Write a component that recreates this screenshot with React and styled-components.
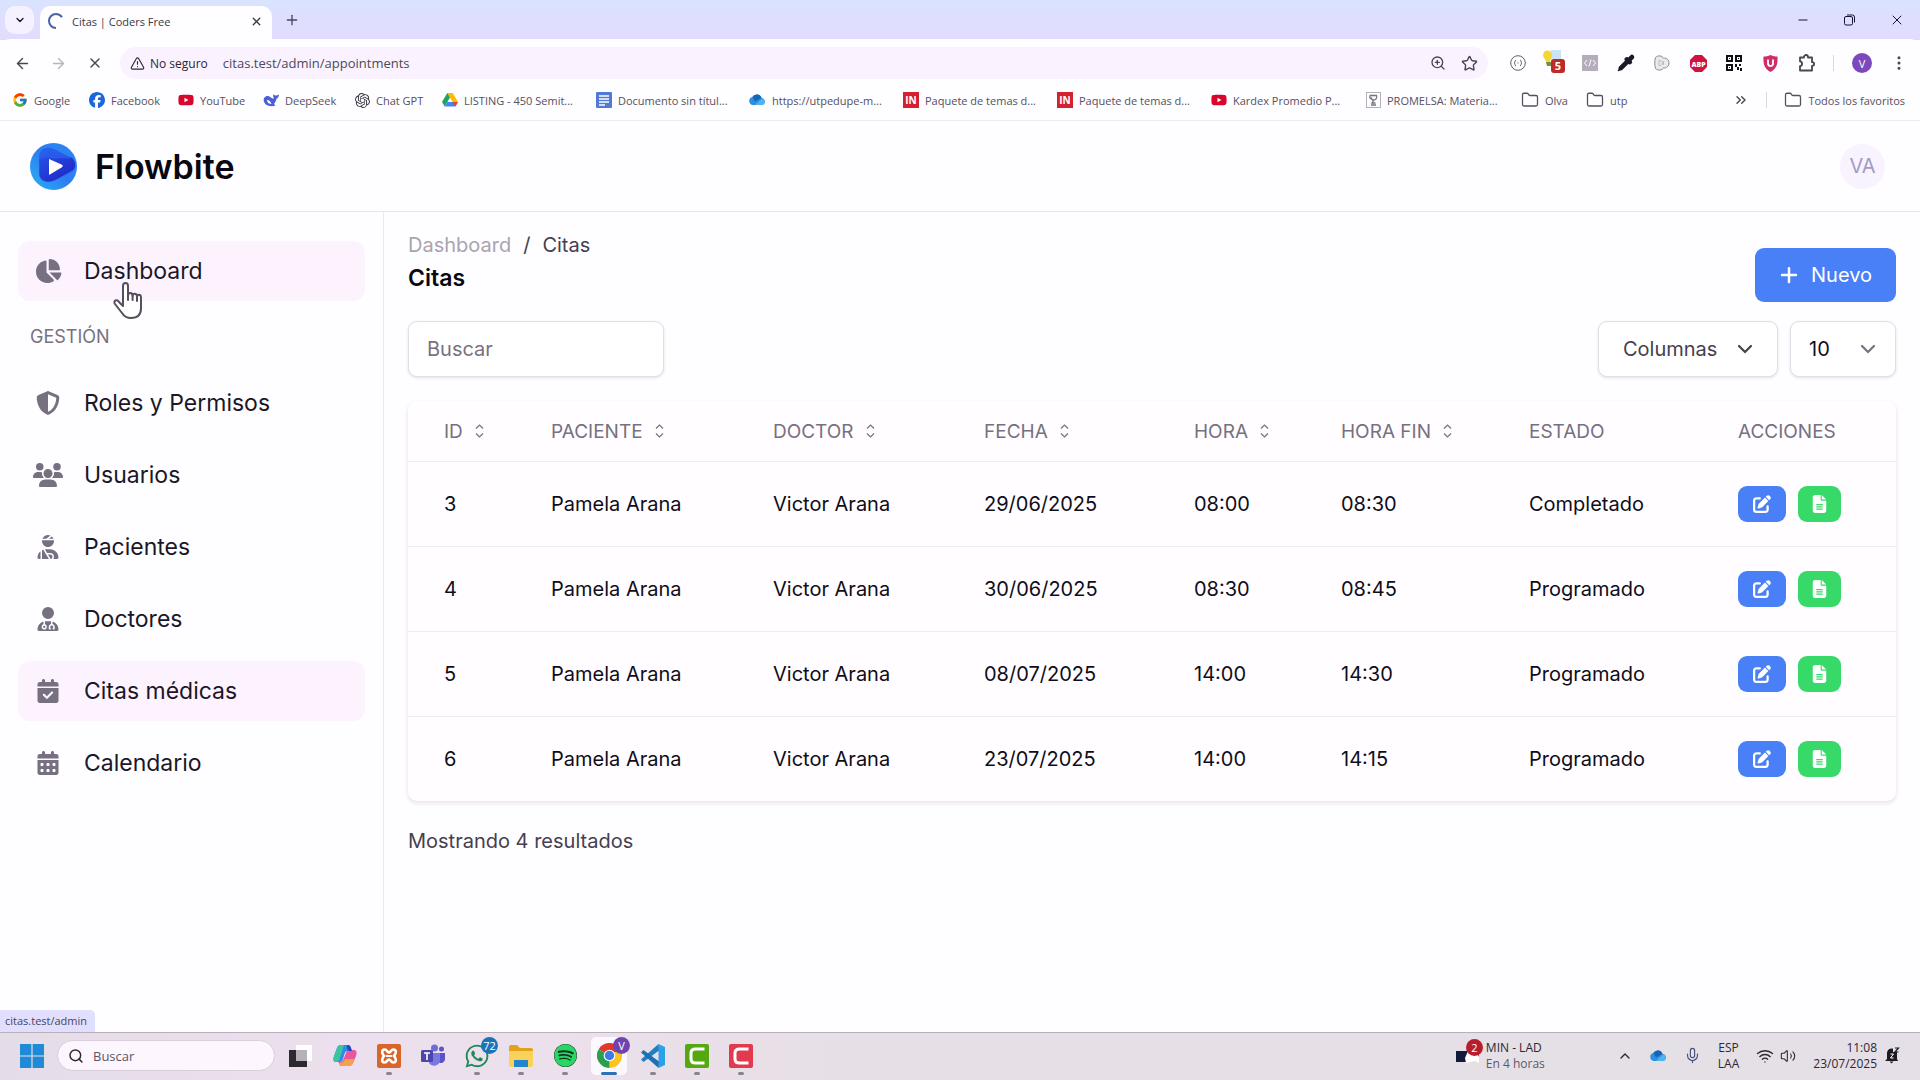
import React from "react";
import styled, { createGlobalStyle, css } from "styled-components";
import {
  FaChartPie, FaShieldHalved, FaUsers, FaUserInjured, FaUserDoctor, FaCalendarCheck,
  FaCalendarDays, FaPlus, FaPenToSquare, FaFileLines, FaFacebook, FaYoutube, FaWhatsapp, FaSpotify,
} from "react-icons/fa6";
import { FcGoogle } from "react-icons/fc";
import { SiOpenai } from "react-icons/si";
import {
  ArrowLeft, ArrowRight, X, TriangleAlert, ZoomIn, Star, ChevronDown, ChevronUp, Plus, Minus,
  Folder, ChevronsRight, Search, Mic, Wifi, Volume2, EllipsisVertical, Pipette,
} from "lucide-react";

const ui = `"Open Sans", "Noto Sans", sans-serif`;
const app = `Inter, Roboto, sans-serif`;

const Global = createGlobalStyle`
  *, *::before, *::after { box-sizing: border-box; }
  body { margin: 0; font-family: ${app}; color: #120f1c; background: #fefdff; }
  button, input, select { font: inherit; color: inherit; margin: 0; }
  button { border: 0; background: none; padding: 0; cursor: pointer; }
  a { color: inherit; text-decoration: none; }
  ul, ol { list-style: none; margin: 0; padding: 0; }
  svg { display: block; flex-shrink: 0; }
`;

const Desktop = styled.div`
  display: flex;
  flex-direction: column;
  min-height: 100vh;
`;

/* ---------- browser ---------- */
const TabStrip = styled.div`
  display: flex;
  align-items: flex-end;
  height: 40px;
  padding-left: 5px;
  background: linear-gradient(#d8e4ff 0, #dedffe 14px, #e1dcfd 100%);
  font-family: ${ui};
`;
const TabSearch = styled.button`
  display: grid;
  place-items: center;
  align-self: center;
  width: 29px;
  height: 28px;
  border-radius: 10px;
  background: #f5f1fe;
`;
const Tab = styled.div`
  display: flex;
  align-items: center;
  gap: 8px;
  width: 232px;
  height: 34px;
  margin-left: 6px;
  padding: 0 9px 4px 8px;
  border-radius: 10px 10px 0 0;
  background: #fefdff;
  font-size: 11px;
  color: #3c3846;
  span { flex: 1; }
`;
const NewTab = styled.button`
  align-self: center;
  margin-left: 12px;
  color: #4b4760;
`;
const WindowButtons = styled.div`
  display: flex;
  align-self: center;
  align-items: center;
  gap: 34px;
  margin: 0 15px 0 auto;
  color: #17123a;
`;

const Toolbar = styled.div`
  display: flex;
  align-items: center;
  gap: 15px;
  height: 45px;
  margin-top: -1px;
  padding: 3px 12px 0 12px;
  border-radius: 10px 10px 0 0;
  background: #fefdff;
  font-family: ${ui};
  color: #4a4652;
`;
const NavButton = styled.button`
  width: 21px;
  display: grid;
  place-items: center;
  color: ${(p) => (p.$off ? "#b9b5be" : "#4a4652")};
`;
const Omnibox = styled.div`
  flex: 1;
  display: flex;
  align-items: center;
  gap: 15px;
  height: 32px;
  padding: 0 10px;
  border-radius: 16px;
  background: #faf2ff;
`;
const Security = styled.button`
  display: flex;
  align-items: center;
  gap: 5px;
  font-size: 12px;
  font-weight: 500;
  color: #2b2733;
`;
const Address = styled.input`
  flex: 1;
  min-width: 0;
  padding: 0;
  border: 0;
  outline: 0;
  background: none;
  font-size: 13px;
  color: #4d4858;
`;
const Extensions = styled.div`
  display: grid;
  grid-auto-flow: column;
  grid-template-columns: repeat(9, 18px) 1px 20px 18px;
  justify-items: center;
  align-items: center;
  gap: 18px;
  padding-left: 6px;
`;
const Divider = styled.span`
  width: 1px;
  height: 16px;
  background: #dcd5e4;
`;
const Profile = styled.button`
  display: grid;
  place-items: center;
  width: 20px;
  height: 20px;
  border-radius: 50%;
  background: #7b48bd;
  color: #fff;
  font-size: 11px;
`;

const BookmarkBar = styled.nav`
  display: flex;
  align-items: center;
  gap: 17px;
  height: 37px;
  padding: 0 15px 4px 12px;
  border-bottom: 1px solid #ece9ef;
  background: #fefdff;
  font-family: ${ui};
  font-size: 11px;
  color: #55505e;
`;
const BookmarkLink = styled.a`
  display: flex;
  align-items: center;
  gap: 6px;
  white-space: nowrap;
  span { ${(p) => p.$label && css`width: ${p.$label}px;`} }
`;
const Overflow = styled.button`
  margin-left: auto;
  color: #45404e;
`;
const RedSquare = styled.i`
  display: grid;
  place-items: center;
  width: 16px;
  height: 16px;
  background: #d5202f;
  color: #fff;
  font: 700 10px ${ui};
`;

/* ---------- application ---------- */
const Header = styled.header`
  display: flex;
  align-items: center;
  justify-content: space-between;
  height: 91px;
  padding: 0 35px 0 30px;
  border-bottom: 1px solid #e9e5ec;
`;
const Brand = styled.a`
  display: flex;
  align-items: center;
  gap: 18px;
  font-size: 34px;
  font-weight: 600;
  color: #09070f;
`;
const Avatar = styled.button`
  display: grid;
  place-items: center;
  width: 45px;
  height: 45px;
  border-radius: 50%;
  background: #f8f3ff;
  color: #a39bc4;
  font-size: 20px;
`;
const Body = styled.div`
  position: relative;
  flex: 1;
  display: flex;
`;
const Sidebar = styled.aside`
  width: 384px;
  padding: 29px 18px;
  border-right: 1px solid #ebe8ee;
  ul { display: grid; gap: 12px; }
`;
const NavLink = styled.a`
  display: flex;
  align-items: center;
  gap: 18px;
  height: 60px;
  padding: 0 12px;
  border-radius: 12px;
  font-size: 23px;
  color: #1b1727;
  background: ${(p) => (p.$active ? "#fdf3ff" : "transparent")};
  svg { width: 36px; color: #767080; }
`;
const NavHeading = styled.li`
  padding: 12px;
  line-height: 24px;
  font-size: 18px;
  color: #777180;
`;
const Content = styled.main`
  flex: 1;
  min-width: 0;
  padding: 18px 24px;
`;
const TitleRow = styled.div`
  display: flex;
  align-items: flex-end;
  justify-content: space-between;
  margin-bottom: 19px;
`;
const Titles = styled.div`
  padding-bottom: 6px;
`;
const Crumbs = styled.ol`
  display: flex;
  gap: 12px;
  line-height: 30px;
  font-size: 20px;
  color: #454050;
  a { color: #aaa4b0; }
`;
const Title = styled.h1`
  margin: 0;
  line-height: 36px;
  font-size: 23px;
  font-weight: 600;
  color: #09070f;
`;
const NewButton = styled.button`
  display: flex;
  align-items: center;
  gap: 12px;
  height: 54px;
  padding: 0 24px;
  border-radius: 9px;
  background: #4a80f7;
  color: #fff;
  font-size: 20px;
`;
const Tools = styled.div`
  display: flex;
  gap: 12px;
  margin-bottom: 24px;
`;
const field = css`
  height: 56px;
  border: 1px solid #e2dde6;
  border-radius: 9px;
  background: #fff;
  box-shadow: 0 1px 3px #2b1b3a1f;
  font-size: 20px;
`;
const SearchField = styled.input`
  ${field}
  width: 256px;
  margin-right: auto;
  padding: 0 18px;
  &::placeholder { color: #77727e; opacity: 1; }
`;
const ColumnsButton = styled.button`
  ${field}
  display: flex;
  align-items: center;
  justify-content: space-between;
  width: 180px;
  padding: 0 24px;
  color: #45404f;
`;
const PageSize = styled.label`
  display: grid;
  align-items: center;
  width: 106px;
  select, svg { grid-area: 1 / 1; }
  select { ${field} width: 100%; padding: 0 18px; appearance: none; }
  svg { justify-self: end; margin-right: 20px; color: #77727e; pointer-events: none; }
`;
const Card = styled.div`
  border-radius: 9px;
  overflow: hidden;
  background: #fffdff;
  box-shadow: 0 2px 4px #6b2c7a24;
`;
const Table = styled.table`
  width: 100%;
  table-layout: fixed;
  border-collapse: separate;
  border-spacing: 0;
  text-align: left;
`;
const Col = styled.col`
  width: ${(p) => p.$share}%;
`;
const Th = styled.th`
  height: 61px;
  padding: 0 0 0 36px;
  border-bottom: 1px solid #f4eaf6;
  font-size: 19px;
  font-weight: 400;
  color: #77707f;
  white-space: nowrap;
  button { display: flex; align-items: center; gap: 12px; }
`;
const Td = styled.td`
  height: 85px;
  padding: 0 0 0 36px;
  border-bottom: 1px solid #efebf2;
  font-size: 20px;
  color: #100d19;
  white-space: nowrap;
  tr:last-child > & { height: 84px; border-bottom: 0; }
`;
const Actions = styled.div`
  display: flex;
  gap: 12px;
`;
const ActionButton = styled.a`
  display: grid;
  place-items: center;
  height: 36px;
  padding: 0 ${(p) => (p.$green ? 14 : 15)}px;
  border-radius: 9px;
  background: ${(p) => (p.$green ? "#37d968" : "#4a80f7")};
  color: #fff;
`;
const DocIcon = styled(FaFileLines)`
  width: 15px;
`;
const Summary = styled.p`
  margin: 24px 0 0;
  line-height: 32px;
  font-size: 20px;
  color: #45404f;
`;
const StatusBubble = styled.div`
  position: absolute;
  left: 0;
  bottom: 0;
  padding: 2px 8px 3px 5px;
  border-radius: 0 5px 0 0;
  background: #e1dffd;
  font: 11px/17px ${ui};
  color: #494560;
`;
const Pointer = styled.svg`
  position: absolute;
  left: 113px;
  top: 70px;
`;

/* ---------- taskbar ---------- */
const Taskbar = styled.footer`
  display: flex;
  align-items: center;
  height: 48px;
  padding: 0 20px 2px;
  border-top: 1px solid #b9b0bd;
  background: linear-gradient(90deg, #e4dde7, #ede0ee 20%, #e7dfe6 45%, #e5dfe7);
  font-family: ${ui};
  font-size: 12px;
  color: #2b2733;
`;
const TaskSearch = styled.label`
  display: flex;
  align-items: center;
  gap: 9px;
  width: 218px;
  height: 31px;
  margin: 0 8px 0 13px;
  padding-left: 10px;
  border: 1px solid #d9cedd;
  border-radius: 16px;
  background: #fdf6ff;
  input { width: 150px; padding: 0; border: 0; outline: 0; background: none; font-size: 13px; }
  input::placeholder { color: #5b5563; opacity: 1; }
`;
const TaskButton = styled.button`
  position: relative;
  display: grid;
  place-items: center;
  width: 36px;
  height: 38px;
  margin-right: 8px;
  border-radius: 5px;
  background: ${(p) => (p.$state === "active" ? "#fdf8fe" : "none")};
  &::after {
    content: "";
    display: ${(p) => (p.$state ? "block" : "none")};
    position: absolute;
    bottom: 0;
    width: ${(p) => (p.$state === "active" ? 16 : 6)}px;
    height: 3px;
    border-radius: 2px;
    background: ${(p) => (p.$state === "active" ? "#2a72b5" : "#8a8390")};
  }
`;
const Badge = styled.span`
  position: absolute;
  top: 0;
  right: -3px;
  display: grid;
  place-items: center;
  min-width: 17px;
  height: 17px;
  padding: 0 2px;
  border-radius: 9px;
  background: ${(p) => p.$color};
  color: #fff;
  font-size: 11px;
  line-height: 1;
`;
const Widget = styled.button`
  position: relative;
  display: flex;
  align-items: center;
  gap: 5px;
  margin-left: auto;
  text-align: left;
  line-height: 16px;
  small { display: block; font-size: 12px; color: #5f5967; }
  ${Badge} { left: 10px; right: auto; top: -1px; }
`;
const SpotifyDisc = styled(FaSpotify)`
  border-radius: 50%;
  background: #16301f;
  color: #25d865;
`;
const Tray = styled.div`
  display: flex;
  align-items: center;
  gap: 17px;
  margin-left: 72px;
  line-height: 16px;
`;
const Stack = styled.div`
  text-align: ${(p) => p.$align};
`;
const TrayPair = styled.div`
  display: flex;
  align-items: center;
  gap: 6px;
`;
const ClockGroup = styled.div`
  display: flex;
  align-items: center;
  gap: 8px;
`;

/* ---------- drawings ---------- */
const Drive = () => (
  <svg width="16" height="16" viewBox="0 0 16 16">
    <path d="M5.3 1h5.4L16 10h-5.4z" fill="#fbbc04" />
    <path d="M5.3 1 0 10l2.7 4.6L8 5.5z" fill="#1ea362" />
    <path d="M5.3 10H16l-2.7 4.6H2.7z" fill="#4285f4" />
    <path d="m16 10-2.7 4.6L10.6 10z" fill="#ea4335" />
  </svg>
);
const Whale = () => (
  <svg width="16" height="14" viewBox="0 0 16 14" fill="#4d5fd6">
    <path d="M1 5c2-3 5-2.500 7-.5C9 5.500 10 6 11 5c-1-1-1-2.500-.5-4 .7 1.200 1.500 1.600 2.500 1.500C14 2.400 15 2 16 1.500c0 2-1 3.500-2.500 4.300C13 8 12.300 9.500 11 11l1.500 1.500C9 14 4 13 2 10.500.8 9 .3 7 1 5z" />
    <path d="M4 7c2 0 3.500 1.500 4.500 4C6 11 4 9.500 4 7z" fill="#fefdff" />
  </svg>
);
const Doc = () => (
  <svg width="16" height="16" viewBox="0 0 16 16">
    <rect width="16" height="16" rx="1" fill="#5079d8" />
    <path d="M3 4h10M3 7h10M3 10h10M3 13h6" stroke="#fff" strokeWidth="1.400" />
  </svg>
);
const Cloud = ({ size = 17 }) => (
  <svg width={size} height={size * 0.65} viewBox="0 0 17 11">
    <path d="M4 11a4 4 0 0 1-.6-7.900A5 5 0 0 1 12.500 4 3.600 3.600 0 0 1 13.500 11z" fill="#2d8fe0" />
    <path d="M3.400 3.100A5 5 0 0 1 12.500 4L6 7.500z" fill="#1566b8" />
    <path d="m6 11 7-6.500A3.400 3.400 0 0 1 13.500 11z" fill="#4fb4f0" />
  </svg>
);
const Trophy = () => (
  <svg width="15" height="16" viewBox="0 0 15 16" fill="none" stroke="#77727e">
    <rect x=".5" y=".5" width="14" height="15" stroke="#b5b0ba" />
    <path d="M4 3.500h6.500c1 3-1 4.500-3 4.500S5 6.500 6 5.500M4 3.500c-.5 2 0 3 1 3.500M8 8l-2 3h3.500M5 13h5" strokeWidth="1.300" />
  </svg>
);
const Braces = () => (
  <svg width="16" height="16" viewBox="0 0 16 16" fill="none" stroke="#625d69">
    <circle cx="8" cy="8" r="7.300" />
    <path d="M6 5c-1.500 0-.5 3-2 3 1.500 0 .5 3 2 3M10 5c1.500 0 .5 3 2 3-1.500 0-.5 3-2 3M7.500 8h1" />
  </svg>
);
const Bulb = () => (
  <svg width="22" height="28" viewBox="0 0 22 28">
    <rect x="8" y="1" width="10" height="11" fill="#c9e4f4" />
    <path d="M0 6a4.500 4.500 0 0 1 9 0c0 3-2 4-2 7H3c0-3-3-4-3-7z" fill="#f3d63c" />
    <path d="M3 13h5v4H4z" fill="#7a8b3e" />
    <rect x="8" y="10" width="14" height="14" rx="3" fill="#bd2a27" />
    <text x="15" y="21" fontSize="11" fontWeight="700" fill="#fff" textAnchor="middle" fontFamily="Open Sans">5</text>
  </svg>
);
const CodeBox = () => (
  <svg width="16" height="16" viewBox="0 0 16 16" fill="none" stroke="#fff">
    <rect width="16" height="16" fill="#b3adbc" stroke="none" />
    <path d="M5 5 2.500 8 5 11M11 5l2.500 3L11 11M9 4.500l-2 7" />
  </svg>
);
const Blob = () => (
  <svg width="16" height="16" viewBox="0 0 16 16" fill="#ece9ee" stroke="#8d8893">
    <path d="M1.500 2.500C4 0 8 .5 9.500 3.200c3-.7 5.500 1.800 5.500 4.800s-2.500 5.500-5.500 4.800C8 15.500 4 16 1.500 13.500.5 10 .5 6 1.500 2.500z" />
    <path d="M5 5.500a2.600 2.600 0 1 1 0 5zM9.500 6v4" fill="none" stroke="#bdb8c3" />
  </svg>
);
const Abp = () => (
  <svg width="17" height="17" viewBox="0 0 17 17">
    <path d="M5 0h7l5 5v7l-5 5H5l-5-5V5z" fill="#cf1440" />
    <text x="8.500" y="11.500" fontSize="7" fontWeight="800" fill="#fff" textAnchor="middle" fontFamily="Open Sans">ABP</text>
  </svg>
);
const Qr = () => (
  <svg width="16" height="16" viewBox="0 0 16 16" fill="none" stroke="#111" strokeWidth="2">
    <path d="M1 1h5v5H1zM10 1h5v5h-5zM1 10h5v5H1z" />
    <path d="M3 3h1v1H3zM12 3h1v1h-1zM3 12h1v1H3zM14 14h1v1h-1z" fill="#111" stroke="none" />
    <path d="M10 9v3M14 9v2M12 12v3M15 13v3" />
  </svg>
);
const ShieldU = () => (
  <svg width="15" height="17" viewBox="0 0 15 17">
    <path d="M7.500 0c2.500 1 4.500 1.500 7 1.500C15 9 13.500 14 7.500 17 1.500 14 0 9 .5 1.500 3 1.500 5 1 7.500 0z" fill="#cf2c69" />
    <path d="M5 4.500v4a2.500 2.500 0 0 0 5 0v-4" fill="none" stroke="#fff" strokeWidth="1.800" />
  </svg>
);
const Puzzle = () => (
  <svg width="17" height="18" viewBox="0 0 17 18" fill="none" stroke="currentColor" strokeWidth="1.800" strokeLinejoin="round">
    <path d="M2 3.500h4V3a2 2 0 0 1 4 0v.5h4v4.700h.3a1.800 1.800 0 0 1 0 3.600H14v4.700H2v-4.300c2.800-.4 2.800-4.400 0-4.800z" />
  </svg>
);
const Restore = () => (
  <svg width="11" height="12" viewBox="0 0 11 12" fill="none" stroke="currentColor">
    <rect x=".5" y="2.500" width="8" height="8.500" rx="1.500" />
    <path d="M3 1h5.500a2 2 0 0 1 2 2v5.500" />
  </svg>
);
const Spinner = () => (
  <svg width="16" height="16" viewBox="0 0 16 16" fill="none" stroke="#4b62a8" strokeWidth="2">
    <path d="M8 15A7 7 0 0 1 8 1c2.500 0 4.500 1 6 3.200" />
  </svg>
);
const FlowLogo = () => (
  <svg width="47" height="47" viewBox="0 0 47 47">
    <defs>
      <linearGradient id="disc" x1="0" y1="1" x2="1" y2="0">
        <stop offset="0" stopColor="#2ab4f2" /><stop offset=".5" stopColor="#2c7df2" /><stop offset="1" stopColor="#2e86f4" />
      </linearGradient>
      <linearGradient id="fold" x1="0" y1="0" x2="1" y2="1">
        <stop offset="0" stopColor="#2450e4" /><stop offset="1" stopColor="#2320c2" />
      </linearGradient>
    </defs>
    <circle cx="23.500" cy="23.500" r="23.500" fill="url(#disc)" />
    <path d="M9 14C9 6 17 3 24 6l16 8c6 3 7 10 3 14L26 37c-8 4-17 2-17-7z" fill="#2560ec" />
    <path d="M9.500 16c3-3 8-2.500 12-.5l20-1c4 3 5 9 1.500 12.500L26 36.500c-8 4-16.500 2-16.500-6.500z" fill="url(#fold)" />
    <path d="M10 16C16 8 26 9 32 11l9 5c-8 0-13-3-20-1z" fill="#2c55ea" opacity=".7" />
    <path d="M19 16 31.500 21.500q2.500 1.500 0 3L19 32z" fill="#fff" />
  </svg>
);
const Sort = () => (
  <svg width="9" height="14" viewBox="0 0 9 14" fill="none" stroke="#77707f" strokeWidth="1.200">
    <path d="m1 4.500 3.500-3.500L8 4.500M1 9.500 4.500 13 8 9.500" />
  </svg>
);
const Chevron = () => (
  <svg width="16" height="10" viewBox="0 0 16 10" fill="none" stroke="currentColor" strokeWidth="2.200" strokeLinecap="round">
    <path d="m2 2 6 6 6-6" />
  </svg>
);
const Windows = () => (
  <svg width="24" height="24" viewBox="0 0 24 24" fill="#1f8bd8">
    <path d="M0 0h11.400v11.400H0zM12.600 0H24v11.400H12.600zM0 12.600h11.400V24H0zM12.600 12.600H24V24H12.600z" />
  </svg>
);
const TaskView = () => (
  <svg width="24" height="24" viewBox="0 0 24 24">
    <rect x="7" y="1" width="16" height="16" fill="#fff" />
    <rect x="0" y="6" width="18" height="17" fill="#2c2931" />
    <rect x="7" y="6" width="11" height="11" fill="#b5b0ba" />
  </svg>
);
const Copilot = () => (
  <svg width="24" height="23" viewBox="0 0 24 23">
    <path d="M8 1h7c2 0 2.500 1 3 3l1 3h-4c-2 0-3 1-3.500 3L10 15c-.6 2-1.500 3-3.500 3H3c-3 0-3-3-2-6L4 4c.7-2 2-3 4-3z" fill="#2c8be8" />
    <path d="M1.500 11 4 4c.7-2 2-3 4-3h3L7 14c-.5 2-1.500 4-4 4-3 0-2.500-4-1.500-7z" fill="#3ec2a2" />
    <path d="M16 22H9c-2 0-2.500-1-3-3l-.5-1H7c2 0 3-1 3.500-3L13 9c.6-2 1.500-3 3.500-3H21c3 0 3 3 2 6l-3 7c-.7 2-2 3-4 3z" fill="#e8579b" />
    <path d="M16 22H9c-1.500 0-2.500-1-3-3 3 0 5-1 6-4h9l-1 4c-.7 2-2 3-4 3z" fill="#f3a34b" />
    <path d="M14 1c3 0 3.500 1.500 5 6h-3c-2-1-2-4-2-6z" fill="#2447b8" />
  </svg>
);
const Xampp = () => (
  <svg width="24" height="24" viewBox="0 0 24 24" fill="none">
    <rect width="24" height="24" rx="2" fill="#d9652b" />
    <path d="M7.500 5.500c3 0 2.500 3 4.500 3s1.500-3 4.500-3 3 4 .5 6.500c2.500 2.500 2.500 6.500-.5 6.500s-2.500-3-4.500-3-1.500 3-4.500 3-3-4-.5-6.500C4.500 9.500 4.500 5.500 7.500 5.500z" stroke="#fff" strokeWidth="2.600" />
    <path d="M9 12h6" stroke="#fff" strokeWidth="2" />
  </svg>
);
const Teams = () => (
  <svg width="24" height="23" viewBox="0 0 24 23">
    <circle cx="13.500" cy="4" r="3.500" fill="#6f6bd8" /><circle cx="20.500" cy="5" r="2.500" fill="#5a55c4" />
    <path d="M17 9h7v6a4 4 0 0 1-6 3.500z" fill="#5a55c4" />
    <path d="M8 9h11v7a6 6 0 0 1-11 3z" fill="#7b78e0" />
    <rect x="0" y="6" width="12" height="12" rx="1.500" fill="#4a46ae" />
    <path d="M3 9h6M6 9v7" stroke="#fff" strokeWidth="1.600" />
  </svg>
);
const Explorer = () => (
  <svg width="24" height="22" viewBox="0 0 24 22">
    <path d="M0 2a2 2 0 0 1 2-2h6l3 3h11a2 2 0 0 1 2 2v6H0z" fill="#e2a21c" />
    <path d="M0 6h24v14a2 2 0 0 1-2 2H2a2 2 0 0 1-2-2z" fill="#fad25a" />
    <path d="M5 15h14v7H5z" fill="#2485cf" />
  </svg>
);
const Chrome = () => (
  <svg width="25" height="25" viewBox="0 0 24 24">
    <path d="M12 12 1.600 6A12 12 0 0 1 22.400 6z" fill="#e0382c" />
    <path d="M12 12 22.400 6A12 12 0 0 1 12 24z" fill="#fbc51c" />
    <path d="M12 12v12A12 12 0 0 1 1.600 6z" fill="#2b9f4c" />
    <circle cx="12" cy="12" r="5.600" fill="#fff" /><circle cx="12" cy="12" r="4.500" fill="#3b7de8" />
  </svg>
);
const VsCode = () => (
  <svg width="24" height="24" viewBox="0 0 24 24">
    <path d="m17.500 0 6.500 3v18l-6.500 3z" fill="#2ba1e8" />
    <path d="M17.500 0 0 15.500 2.500 18 18 6.500z" fill="#1f80c4" />
    <path d="M17.500 24 0 8.500 2.500 6 18 17.500z" fill="#1c70b4" />
  </svg>
);
const Camtasia = ({ color }) => (
  <svg width="24" height="24" viewBox="0 0 24 24">
    <rect width="24" height="24" rx="2" fill={color} />
    <path d="M19.500 5h-9Q6 5 6 9v6q0 4 4.500 4h9" fill="none" stroke="#fff" strokeWidth="3" />
  </svg>
);
const Game = () => (
  <svg width="25" height="16" viewBox="0 0 25 16">
    <rect x="0" y="3" width="13" height="11" fill="#141a3c" />
    <path d="M12 3h11v12l-4-2-9 2-1-5z" fill="#fff" />
    <path d="M18 0h5v9z" fill="#b3202c" />
  </svg>
);
const Bell = () => (
  <svg width="15" height="17" viewBox="0 0 15 17">
    <path d="M2 6c0-3 2.500-5 6-4.500V5h4v7l1 2H0l2-2zM4.500 14.500h4l-2 2z" fill="#1d1a24" />
    <path d="M10 1h3.500L10 5h3.500" fill="none" stroke="#1d1a24" strokeWidth="1.200" />
    <path d="M5.500 7h3l-3 4h3" fill="none" stroke="#fff" />
  </svg>
);

/* ---------- data ---------- */
const bookmarks = [
  ["Google", <FcGoogle size={16} />, 38],
  ["Facebook", <FaFacebook size={16} color="#1b66d8" />, 50],
  ["YouTube", <FaYoutube size={16} color="#d9052c" />, 46],
  ["DeepSeek", <Whale />, 53],
  ["Chat GPT", <SiOpenai size={15} color="#3a3642" />, 49],
  ["LISTING - 450 Semit...", <Drive />, 115],
  ["Documento sin títul...", <Doc />, 114],
  ["https://utpedupe-m...", <Cloud />, 114],
  ["Paquete de temas d...", <RedSquare>IN</RedSquare>, 115],
  ["Paquete de temas d...", <RedSquare>IN</RedSquare>, 115],
  ["Kardex Promedio P...", <FaYoutube size={16} color="#d9052c" />, 116],
  ["PROMELSA: Materia...", <Trophy />, 117],
  ["Olva", <Folder size={18} strokeWidth={1.700} />, 24],
  ["utp", <Folder size={18} strokeWidth={1.700} />],
];
const links = [
  ["Roles y Permisos", FaShieldHalved],
  ["Usuarios", FaUsers],
  ["Pacientes", FaUserInjured],
  ["Doctores", FaUserDoctor],
  ["Citas médicas", FaCalendarCheck, true],
  ["Calendario", FaCalendarDays],
];
const columns = [
  ["ID", 107, true], ["PACIENTE", 222, true], ["DOCTOR", 211, true], ["FECHA", 210, true],
  ["HORA", 147, true], ["HORA FIN", 188, true], ["ESTADO", 209], ["ACCIONES", 194],
];
const appointments = [
  ["3", "Pamela Arana", "Victor Arana", "29/06/2025", "08:00", "08:30", "Completado"],
  ["4", "Pamela Arana", "Victor Arana", "30/06/2025", "08:30", "08:45", "Programado"],
  ["5", "Pamela Arana", "Victor Arana", "08/07/2025", "14:00", "14:30", "Programado"],
  ["6", "Pamela Arana", "Victor Arana", "23/07/2025", "14:00", "14:15", "Programado"],
];
const tasks = [
  ["Vista de tareas", <TaskView />],
  ["Copilot", <Copilot />],
  ["XAMPP", <Xampp />, "open"],
  ["Teams", <Teams />],
  ["WhatsApp", <FaWhatsapp size={26} color="#1f8a5b" />, "open", ["72", "#1b73b8"]],
  ["Explorador", <Explorer />, "open"],
  ["Spotify", <SpotifyDisc size={23} />, "open"],
  ["Chrome", <Chrome />, "active", ["V", "#7044b0"]],
  ["Visual Studio Code", <VsCode />, "open"],
  ["Camtasia", <Camtasia color="#55a80f" />, "open"],
  ["Camtasia Recorder", <Camtasia color="#e23a4e" />, "open"],
];

function Browser() {
  return (
    <>
      <TabStrip>
        <TabSearch aria-label="Buscar pestañas"><ChevronDown size={12} strokeWidth={2.500} /></TabSearch>
        <Tab>
          <Spinner />
          <span>Citas | Coders Free</span>
          <button aria-label="Cerrar pestaña"><X size={13} strokeWidth={2.500} /></button>
        </Tab>
        <NewTab aria-label="Nueva pestaña"><Plus size={16} /></NewTab>
        <WindowButtons>
          <button aria-label="Minimizar"><Minus size={14} strokeWidth={1.800} /></button>
          <button aria-label="Restaurar"><Restore /></button>
          <button aria-label="Cerrar"><X size={16} strokeWidth={1.500} /></button>
        </WindowButtons>
      </TabStrip>
      <Toolbar>
        <NavButton aria-label="Atrás"><ArrowLeft size={17} /></NavButton>
        <NavButton aria-label="Adelante" $off><ArrowRight size={17} /></NavButton>
        <NavButton aria-label="Detener"><X size={16} /></NavButton>
        <Omnibox>
          <Security><TriangleAlert size={15} strokeWidth={1.800} />No seguro</Security>
          <Address aria-label="Dirección" defaultValue="citas.test/admin/appointments" />
          <button aria-label="Zoom"><ZoomIn size={16} /></button>
          <button aria-label="Añadir a favoritos"><Star size={17} /></button>
        </Omnibox>
        <Extensions>
          <Braces /><Bulb /><CodeBox />
          <Pipette size={18} fill="#1c1926" color="#1c1926" />
          <Blob /><Abp /><Qr /><ShieldU />
          <Puzzle />
          <Divider />
          <Profile aria-label="Perfil">V</Profile>
          <EllipsisVertical size={18} />
        </Extensions>
      </Toolbar>
      <BookmarkBar>
        {bookmarks.map(([name, icon, width], i) => (
          <BookmarkLink key={i} href="#" $label={width}>{icon}<span>{name}</span></BookmarkLink>
        ))}
        <Overflow aria-label="Más favoritos"><ChevronsRight size={16} /></Overflow>
        <Divider />
        <BookmarkLink href="#"><Folder size={18} strokeWidth={1.700} /><span>Todos los favoritos</span></BookmarkLink>
      </BookmarkBar>
    </>
  );
}

function NavItem({ label, icon: Icon, active }) {
  return (
    <li><NavLink href="#" $active={active}><Icon size={24} />{label}</NavLink></li>
  );
}

function Appointments() {
  return (
    <Content>
      <TitleRow>
        <Titles>
          <Crumbs><li><a href="#">Dashboard</a></li><li>/</li><li>Citas</li></Crumbs>
          <Title>Citas</Title>
        </Titles>
        <NewButton><FaPlus size={20} />Nuevo</NewButton>
      </TitleRow>
      <Tools>
        <SearchField aria-label="Buscar" placeholder="Buscar" />
        <ColumnsButton>Columnas<Chevron /></ColumnsButton>
        <PageSize>
          <select aria-label="Resultados por página" defaultValue="10"><option>10</option><option>25</option><option>50</option></select>
          <Chevron />
        </PageSize>
      </Tools>
      <Card>
        <Table>
          <colgroup>{columns.map(([name, w]) => <Col key={name} $share={(w / 1488) * 100} />)}</colgroup>
          <thead>
            <tr>
              {columns.map(([name, , sortable]) => (
                <Th key={name}>{sortable ? <button>{name}<Sort /></button> : name}</Th>
              ))}
            </tr>
          </thead>
          <tbody>
            {appointments.map((row) => (
              <tr key={row[0]}>
                {row.map((cell, i) => <Td key={i}>{cell}</Td>)}
                <Td>
                  <Actions>
                    <ActionButton href="#" aria-label="Editar"><FaPenToSquare size={18} /></ActionButton>
                    <ActionButton href="#" aria-label="Ver consulta" $green><DocIcon size={18} /></ActionButton>
                  </Actions>
                </Td>
              </tr>
            ))}
          </tbody>
        </Table>
      </Card>
      <Summary>Mostrando 4 resultados</Summary>
    </Content>
  );
}

export default function App() {
  return (
    <Desktop>
      <Global />
      <Browser />
      <Header>
        <Brand href="#"><FlowLogo />Flowbite</Brand>
        <Avatar>VA</Avatar>
      </Header>
      <Body>
        <Sidebar>
          <ul>
            <NavItem label="Dashboard" icon={FaChartPie} active />
            <NavHeading>GESTIÓN</NavHeading>
            {links.map(([label, icon, active]) => <NavItem key={label} label={label} icon={icon} active={active} />)}
          </ul>
        </Sidebar>
        <Appointments />
        <StatusBubble>citas.test/admin</StatusBubble>
        <Pointer width="29" height="38" viewBox="0 0 29 38" fill="#fff" stroke="#55505c" strokeWidth="2" strokeLinejoin="round" strokeLinecap="round">
          <path d="M10 24V4q0-3 2.500-3T15 4v10q0-3 2.300-3t2.300 3q0-2.300 2.200-2.300T24 15q0-2.300 2-2.300t2 3V26q0 10-10 10-6 0-9-5l-7-9q-1.500-2.500.5-3.500T6 20z" />
          <path d="M15 13v5M19.600 14v4M24 15v4" fill="none" />
        </Pointer>
      </Body>
      <Taskbar>
        <button aria-label="Inicio"><Windows /></button>
        <TaskSearch><Search size={16} strokeWidth={2.200} /><input placeholder="Buscar" aria-label="Buscar en Windows" /></TaskSearch>
        {tasks.map(([name, icon, state, badge]) => (
          <TaskButton key={name} aria-label={name} $state={state}>
            {icon}{badge && <Badge $color={badge[1]}>{badge[0]}</Badge>}
          </TaskButton>
        ))}
        <Widget><Game /><Badge $color="#b3202c">2</Badge><span>MIN - LAD<small>En 4 horas</small></span></Widget>
        <Tray>
          <ChevronUp size={16} />
          <Cloud size={17} />
          <Mic size={17} strokeWidth={1.600} color="#47507c" />
          <Stack $align="center">ESP<br />LAA</Stack>
          <TrayPair><Wifi size={18} strokeWidth={1.800} /><Volume2 size={16} strokeWidth={1.600} /></TrayPair>
          <ClockGroup><Stack $align="right">11:08<br />23/07/2025</Stack><Bell /></ClockGroup>
        </Tray>
      </Taskbar>
    </Desktop>
  );
}
